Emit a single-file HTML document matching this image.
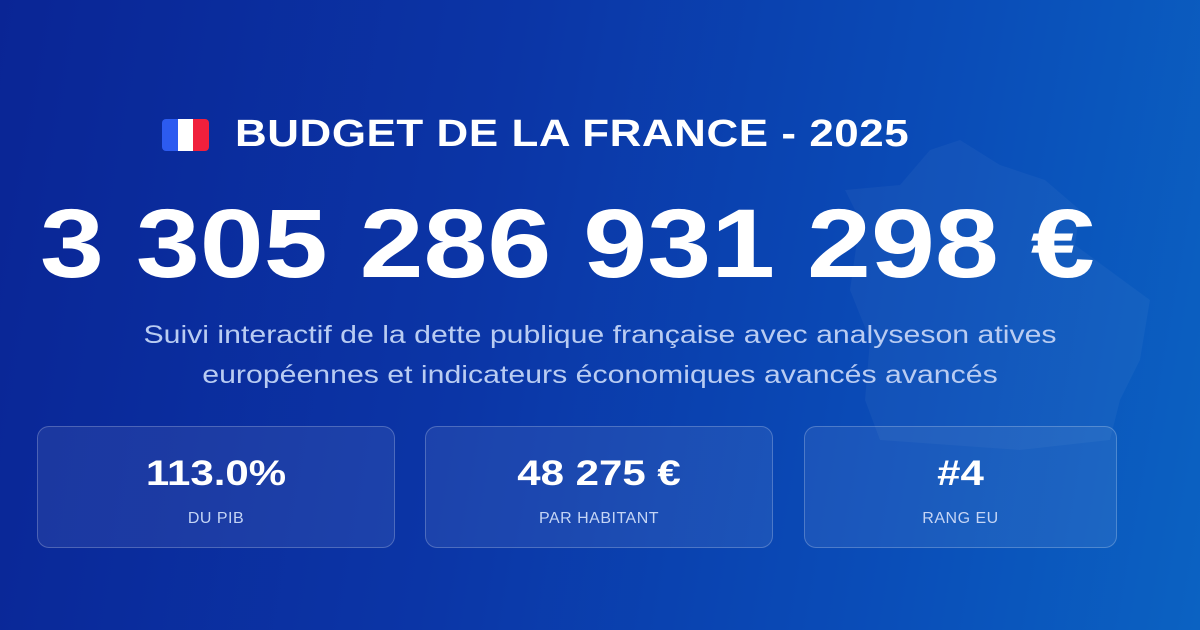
<!DOCTYPE html>
<html><head><meta charset="utf-8"><style>
*{margin:0;padding:0;box-sizing:border-box}
body{width:1200px;height:630px;overflow:hidden;font-family:"Liberation Sans",sans-serif;color:#fff;
background:linear-gradient(100deg,#0a2595 0%,#0b35a6 40%,#0a4db8 75%,#0b62c2 100%);position:relative}
.abs{position:absolute}
.flag{left:162px;top:119px;width:47px;height:32px;border-radius:4px;overflow:hidden;display:flex}
.flag div{flex:1}
.title{left:235px;top:113px;font-size:38px;font-weight:bold;letter-spacing:0.5px;white-space:nowrap;transform:scaleX(1.155);transform-origin:0 0}
.big{left:40px;top:188px;font-size:97px;font-weight:bold;letter-spacing:0;white-space:nowrap;transform:scaleX(1.185);transform-origin:0 0}
.sub{left:0;width:1200px;text-align:center;font-size:25px;color:#b9ccf2;line-height:40px;top:315px;transform:scaleX(1.21);transform-origin:600px 0}
.card{top:426px;height:122px;border:1px solid rgba(255,255,255,0.22);border-radius:12px;background:rgba(255,255,255,0.07);text-align:center}
.card .v{font-size:35px;font-weight:bold;margin-top:27px;transform:scaleX(1.2)}
.card .l{font-size:16px;color:#c5d5f5;margin-top:16px;letter-spacing:0.5px}
</style></head><body>
<svg class="abs" style="left:0;top:0" width="1200" height="630"><path d="M960 140 L1000 165 L1045 180 L1080 210 L1075 245 L1150 300 L1140 360 L1120 400 L1110 440 L1020 450 L950 445 L880 440 L865 400 L870 340 L850 290 L860 220 L845 190 L900 185 L930 150 Z" fill="rgba(255,255,255,0.04)"/></svg>
<div class="abs flag"><div style="background:#2c5bf0"></div><div style="background:#fff"></div><div style="background:#f0203c"></div></div>
<div class="abs title">BUDGET DE LA FRANCE - 2025</div>
<div class="abs big">3 305 286 931 298 €</div>
<div class="abs sub">Suivi interactif de la dette publique française avec analyseson atives<br>européennes et indicateurs économiques avancés avancés</div>
<div class="abs card" style="left:37px;width:358px"><div class="v">113.0%</div><div class="l">DU PIB</div></div>
<div class="abs card" style="left:425px;width:348px"><div class="v">48 275 €</div><div class="l">PAR HABITANT</div></div>
<div class="abs card" style="left:804px;width:313px"><div class="v">#4</div><div class="l">RANG EU</div></div>
</body></html>
